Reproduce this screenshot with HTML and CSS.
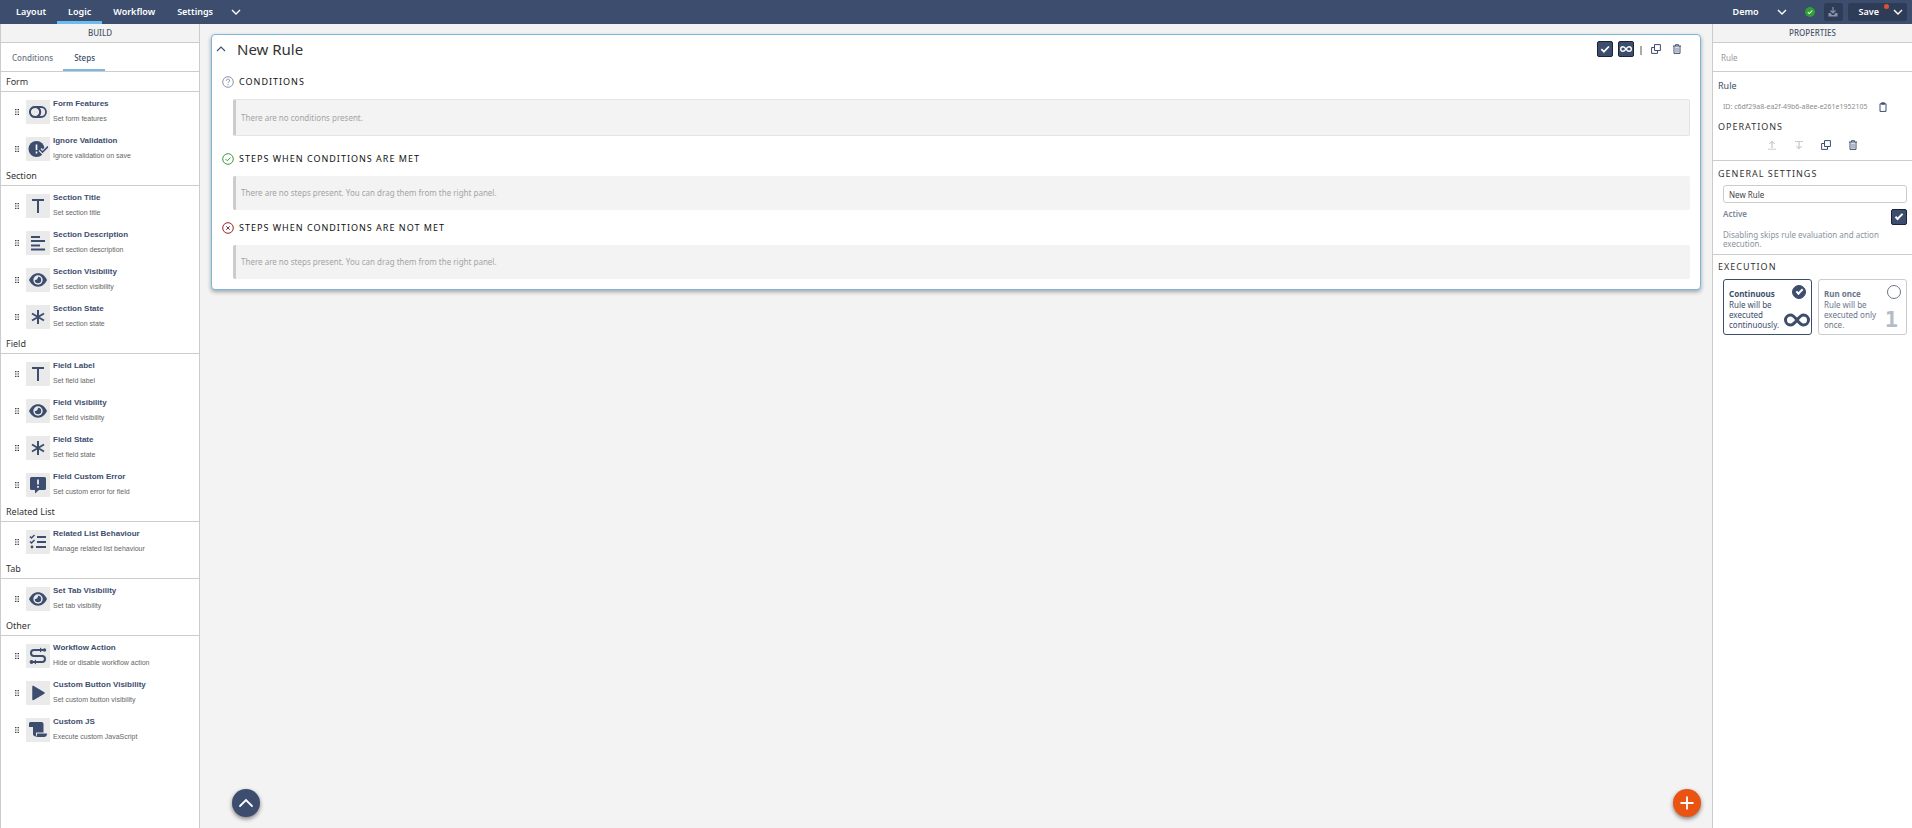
FILE: index.html
```html
<!DOCTYPE html>
<html lang="en">
<head>
    <meta charset="UTF-8">
    <meta name="viewport" content="width=device-width, initial-scale=1.0">
    <title>Logic - New Rule</title>
    <link rel="stylesheet" href="styles.css">
</head>
<body>
    <!-- shared icons -->
    <svg class="sprite" aria-hidden="true">
        <symbol id="i-down" viewBox="0 0 10 10"><path d="M1 3l4 4 4-4" fill="none" stroke="currentColor" stroke-width="1.4"/></symbol>
        <symbol id="i-up" viewBox="0 0 10 10"><path d="M1 7l4-4 4 4" fill="none" stroke="currentColor" stroke-width="1.1"/></symbol>
        <symbol id="i-check" viewBox="0 0 10 10"><path d="M1.3 5.2l2.6 2.5 5-5.2" fill="none" stroke="currentColor" stroke-width="1.7"/></symbol>
        <symbol id="i-infinity" viewBox="0 0 26 14"><path d="M13 7C10 3 8.500 2 6.500 2a5 5 0 0 0 0 10C8.500 12 10 11 13 7S17.500 2 19.500 2a5 5 0 0 1 0 10C17.500 12 16 11 13 7z" fill="none" stroke="currentColor"/></symbol>
        <symbol id="i-copy" viewBox="0 0 10 10"><path d="M3.500 .6h5.900v5.900H3.500zM3.500 3.500H.6v5.900h5.900V6.500" fill="none" stroke="currentColor"/></symbol>
        <symbol id="i-trash" viewBox="0 0 10 10"><path d="M1 2h8M3.500 2V.7h3V2M2 2v7.400h6V2" fill="none" stroke="currentColor"/><path d="M4 3.500v5M6 3.500v5" stroke="currentColor" stroke-width=".8"/></symbol>
        <symbol id="i-clipboard" viewBox="0 0 10 10"><path d="M2 1.800h6v7.600H2z" fill="none" stroke="currentColor"/><path d="M3.300.3h3.400v2.400H3.300z" fill="currentColor"/></symbol>
        <symbol id="i-dots" viewBox="0 0 4 6"><path d="M0 0h1.500v1.200H0zM2.500 0H4v1.200H2.500zM0 2.400h1.500v1.200H0zM2.500 2.400H4v1.200H2.500zM0 4.800h1.500V6H0zM2.500 4.800H4V6H2.500z" fill="currentColor"/></symbol>
        <symbol id="i-toggle" viewBox="0 0 20 20"><rect x="2" y="5" width="16" height="10" rx="5" fill="none" stroke="currentColor" stroke-width="1.800"/><circle cx="7" cy="10" r="5" fill="none" stroke="currentColor" stroke-width="1.800"/><path d="M9.500 5.500a5 5 0 0 1 0 9" fill="none" stroke="currentColor" stroke-width="1.800"/></symbol>
        <symbol id="i-ignore" viewBox="0 0 20 20"><circle cx="8.500" cy="10" r="8" fill="currentColor"/><path d="M8.500 5.500v5.500M8.500 12.500v2" stroke="#fff" stroke-width="1.600"/><path d="M12 10.500l3 3L20 7.500" fill="none" stroke="#eaeaea" stroke-width="4"/><path d="M11.500 10l3 3L20 7.500" fill="none" stroke="currentColor" stroke-width="1.600"/></symbol>
        <symbol id="i-text" viewBox="0 0 20 20"><path d="M4 4h12M10 4v13" fill="none" stroke="currentColor" stroke-width="2"/></symbol>
        <symbol id="i-lines" viewBox="0 0 20 20"><path d="M3 4h9M3 8h14M3 12.500h9M3 16.500h14" stroke="currentColor" stroke-width="2"/></symbol>
        <symbol id="i-eye" viewBox="0 0 20 20"><path d="M1 10C3 6 6 3.300 10 3.300S17 6 19 10c-2 4-5 6.700-9 6.700S3 14 1 10z" fill="currentColor"/><circle cx="10" cy="10" r="4.700" fill="#eaeaea"/><path d="M10 6.800A3.200 3.200 0 1 1 6.800 10c1.700.4 3.400-1.200 3.200-3.200z" fill="currentColor"/></symbol>
        <symbol id="i-star" viewBox="0 0 20 20"><path d="M10 3v14M4 6.500l12 7M16 6.500l-12 7" stroke="currentColor" stroke-width="2"/></symbol>
        <symbol id="i-error" viewBox="0 0 20 20"><path d="M3.500 2h13A1.500 1.500 0 0 1 18 3.500v10a1.500 1.500 0 0 1-1.500 1.500H11l-4 3.500V15H3.500A1.500 1.500 0 0 1 2 13.500v-10A1.500 1.500 0 0 1 3.500 2z" fill="currentColor"/><path d="M10 4.500v5M10 11v1.800" stroke="#fff" stroke-width="1.600"/></symbol>
        <symbol id="i-list" viewBox="0 0 20 20"><path d="M9 5h9M9 10h9M8 15h10" stroke="currentColor" stroke-width="2"/><path d="M2 4.500l1.500 1.500L6.500 3M2 9.500L3.500 11l3-3" fill="none" stroke="currentColor" stroke-width="1.500"/><circle cx="4" cy="15" r="1.400" fill="currentColor"/></symbol>
        <symbol id="i-flow" viewBox="0 0 20 20"><path d="M15 4H6a3 3 0 0 0 0 6h8a3 3 0 0 1 0 6H5" fill="none" stroke="currentColor" stroke-width="2"/><path d="M12 1.500L15 4l-3 2.500zM8 13.500L5 16l3 2.500z" fill="currentColor"/><circle cx="16.500" cy="4" r="1.700" fill="currentColor"/><circle cx="3.500" cy="16" r="1.900" fill="currentColor"/></symbol>
        <symbol id="i-play" viewBox="0 0 20 20"><path d="M5 3.500v13l11-6.500z" fill="currentColor" stroke="currentColor" stroke-width="1.500" stroke-linejoin="round"/></symbol>
        <symbol id="i-scroll" viewBox="0 0 20 20"><path d="M1 3.500C1 2.500 2 2 3 2h10.500a2 2 0 0 1 2 2v8.500H8v4c-2 0-3-1-3-2.500V7H1z" fill="currentColor"/><path d="M9 13.500h10a3 3 0 0 1-3 3.500H7.500c1 0 1.500-1 1.500-3.500z" fill="currentColor"/></symbol>
        <symbol id="i-moveup" viewBox="0 0 10 10"><path d="M5 8V1.500M2.300 4L5 1.300 7.700 4" fill="none" stroke="currentColor"/><path d="M1 9.200h8" stroke="currentColor" stroke-dasharray="1.500 .6"/></symbol>
        <symbol id="i-movedown" viewBox="0 0 10 10"><path d="M5 2v6.500M2.300 6L5 8.700 7.700 6" fill="none" stroke="currentColor"/><path d="M1 1.500h8" stroke="currentColor" stroke-dasharray="1.500 .6"/></symbol>
        <symbol id="i-download" viewBox="0 0 10 10"><path d="M5 0v6M2.500 3.500L5 6l2.500-2.500" fill="none" stroke="currentColor" stroke-width="1.200"/><path d="M.5 6v3.500h9V6H7.500L6 8H4L2.500 6z" fill="currentColor"/></symbol>
    </svg>

    <header class="topbar">
        <nav class="menu">
            <a href="#">Layout</a>
            <a href="#" class="active">Logic</a>
            <a href="#">Workflow</a>
            <a href="#">Settings</a>
            <button class="menu-more" aria-label="More"><svg class="icon"><use href="#i-down"/></svg></button>
        </nav>
        <div class="tools">
            <button class="env">Demo <svg class="icon"><use href="#i-down"/></svg></button>
            <span class="status"><svg><use href="#i-check"/></svg></span>
            <button class="dark-btn download" aria-label="Download"><svg class="icon"><use href="#i-download"/></svg></button>
            <button class="dark-btn save">Save <svg class="icon"><use href="#i-down"/></svg></button>
        </div>
    </header>

    <div class="layout">
        <aside class="panel build">
            <h2 class="panel-title">BUILD</h2>
            <div class="tabs">
                <a href="#">Conditions</a>
                <a href="#" class="active">Steps</a>
            </div>

            <h3 class="group">Form</h3>
            <div class="step"><svg class="grip"><use href="#i-dots"/></svg><span class="tile"><svg><use href="#i-toggle"/></svg></span><div><strong>Form Features</strong><p>Set form features</p></div></div>
            <div class="step"><svg class="grip"><use href="#i-dots"/></svg><span class="tile"><svg><use href="#i-ignore"/></svg></span><div><strong>Ignore Validation</strong><p>Ignore validation on save</p></div></div>

            <h3 class="group">Section</h3>
            <div class="step"><svg class="grip"><use href="#i-dots"/></svg><span class="tile"><svg><use href="#i-text"/></svg></span><div><strong>Section Title</strong><p>Set section title</p></div></div>
            <div class="step"><svg class="grip"><use href="#i-dots"/></svg><span class="tile"><svg><use href="#i-lines"/></svg></span><div><strong>Section Description</strong><p>Set section description</p></div></div>
            <div class="step"><svg class="grip"><use href="#i-dots"/></svg><span class="tile"><svg><use href="#i-eye"/></svg></span><div><strong>Section Visibility</strong><p>Set section visibility</p></div></div>
            <div class="step"><svg class="grip"><use href="#i-dots"/></svg><span class="tile"><svg><use href="#i-star"/></svg></span><div><strong>Section State</strong><p>Set section state</p></div></div>

            <h3 class="group">Field</h3>
            <div class="step"><svg class="grip"><use href="#i-dots"/></svg><span class="tile"><svg><use href="#i-text"/></svg></span><div><strong>Field Label</strong><p>Set field label</p></div></div>
            <div class="step"><svg class="grip"><use href="#i-dots"/></svg><span class="tile"><svg><use href="#i-eye"/></svg></span><div><strong>Field Visibility</strong><p>Set field visibility</p></div></div>
            <div class="step"><svg class="grip"><use href="#i-dots"/></svg><span class="tile"><svg><use href="#i-star"/></svg></span><div><strong>Field State</strong><p>Set field state</p></div></div>
            <div class="step"><svg class="grip"><use href="#i-dots"/></svg><span class="tile"><svg><use href="#i-error"/></svg></span><div><strong>Field Custom Error</strong><p>Set custom error for field</p></div></div>

            <h3 class="group">Related List</h3>
            <div class="step"><svg class="grip"><use href="#i-dots"/></svg><span class="tile"><svg><use href="#i-list"/></svg></span><div><strong>Related List Behaviour</strong><p>Manage related list behaviour</p></div></div>

            <h3 class="group">Tab</h3>
            <div class="step"><svg class="grip"><use href="#i-dots"/></svg><span class="tile"><svg><use href="#i-eye"/></svg></span><div><strong>Set Tab Visibility</strong><p>Set tab visibility</p></div></div>

            <h3 class="group">Other</h3>
            <div class="step"><svg class="grip"><use href="#i-dots"/></svg><span class="tile"><svg><use href="#i-flow"/></svg></span><div><strong>Workflow Action</strong><p>Hide or disable workflow action</p></div></div>
            <div class="step"><svg class="grip"><use href="#i-dots"/></svg><span class="tile"><svg><use href="#i-play"/></svg></span><div><strong>Custom Button Visibility</strong><p>Set custom button visibility</p></div></div>
            <div class="step"><svg class="grip"><use href="#i-dots"/></svg><span class="tile"><svg><use href="#i-scroll"/></svg></span><div><strong>Custom JS</strong><p>Execute custom JavaScript</p></div></div>
        </aside>

        <main class="canvas">
            <section class="rule">
                <div class="rule-head">
                    <button class="plain" aria-label="Collapse"><svg class="icon"><use href="#i-up"/></svg></button>
                    <h1>New Rule</h1>
                    <div class="rule-tools">
                        <button class="square" aria-label="Active"><svg><use href="#i-check"/></svg></button>
                        <button class="square wide" aria-label="Continuous"><svg><use href="#i-infinity"/></svg></button>
                        <span class="divider"></span>
                        <button class="plain copy" aria-label="Duplicate"><svg class="icon"><use href="#i-copy"/></svg></button>
                        <button class="plain" aria-label="Delete"><svg class="icon"><use href="#i-trash"/></svg></button>
                    </div>
                </div>

                <h2 class="rule-title"><svg class="mark gray" viewBox="0 0 12 12"><circle cx="6" cy="6" r="5.300"/><path d="M4.300 4.700a1.700 1.500 0 1 1 2.600 1.200c-.6.4-.9.600-.9 1.200M6 8v1.200"/></svg>CONDITIONS</h2>
                <div class="empty outlined">There are no conditions present.</div>

                <h2 class="rule-title"><svg class="mark green" viewBox="0 0 12 12"><circle cx="6" cy="6" r="5.300"/><path d="M3.500 6l1.800 1.800 3.200-3.200"/></svg>STEPS WHEN CONDITIONS ARE MET</h2>
                <div class="empty">There are no steps present. You can drag them from the right panel.</div>

                <h2 class="rule-title"><svg class="mark red" viewBox="0 0 12 12"><circle cx="6" cy="6" r="5.300"/><path d="M4.300 4.300l3.400 3.400M7.700 4.300L4.300 7.700"/></svg>STEPS WHEN CONDITIONS ARE NOT MET</h2>
                <div class="empty">There are no steps present. You can drag them from the right panel.</div>
            </section>

            <button class="fab fab-top" aria-label="Scroll to top"><svg viewBox="0 0 16 16"><path d="M2 11l6-6 6 6" fill="none" stroke="#fff" stroke-width="1.800" stroke-linecap="round"/></svg></button>
            <button class="fab fab-add" aria-label="Add rule"><svg viewBox="0 0 16 16"><path d="M8 1.500v13M1.500 8h13" stroke="#fff" stroke-width="1.800"/></svg></button>
        </main>

        <aside class="panel props">
            <h2 class="panel-title">PROPERTIES</h2>
            <div class="crumb">Rule</div>
            <div class="block first">
                <h3 class="name">Rule</h3>
                <div class="rule-id"><span>ID: c6df29a8-ea2f-49b6-a8ee-e261e1952105</span><button class="plain" aria-label="Copy ID"><svg class="icon"><use href="#i-clipboard"/></svg></button></div>
                <h3>OPERATIONS</h3>
                <div class="ops">
                    <button class="plain" disabled aria-label="Move up"><svg class="icon"><use href="#i-moveup"/></svg></button>
                    <button class="plain" disabled aria-label="Move down"><svg class="icon"><use href="#i-movedown"/></svg></button>
                    <button class="plain" aria-label="Duplicate"><svg class="icon"><use href="#i-copy"/></svg></button>
                    <button class="plain" aria-label="Delete"><svg class="icon"><use href="#i-trash"/></svg></button>
                </div>
            </div>
            <div class="block">
                <h3>GENERAL SETTINGS</h3>
                <input class="text" type="text" value="New Rule" aria-label="Rule name">
                <div class="active-row">
                    <label for="active">Active</label>
                    <input type="checkbox" id="active" checked>
                </div>
                <p class="hint">Disabling skips rule evaluation and action execution.</p>
            </div>
            <div class="block last">
                <h3>EXECUTION</h3>
                <div class="choices">
                    <label class="choice selected">
                        <input type="radio" name="execution" checked>
                        <strong>Continuous</strong>
                        <span>Rule will be executed continuously.</span>
                        <svg class="choice-icon"><use href="#i-infinity"/></svg>
                    </label>
                    <label class="choice">
                        <input type="radio" name="execution">
                        <strong>Run once</strong>
                        <span>Rule will be executed only once.</span>
                        <b class="one">1</b>
                    </label>
                </div>
            </div>
        </aside>
    </div>
</body>
</html>
```
FILE: styles.css
```css
*,
*::before,
*::after{
    padding: 0;
    margin: 0;
    box-sizing: border-box;
}

:root{
    --navy: #3d4d6e;
    --dark: #2f3c58;
    --line: #cccccc;
    --bg: #f3f3f3;
    --blue: #7ab8dc;
}

body{
    display: flex;
    flex-direction: column;
    min-height: 100vh;
    background: var(--bg);
    color: #333;
    font: 9px/12px "Noto Sans", sans-serif;
}

button, input{
    font: inherit;
    color: inherit;
}
button{
    border: none;
    background: none;
}
a{
    color: inherit;
    text-decoration: none;
}
svg{
    display: block;
}
.sprite{
    display: none;
}
.icon{
    width: 10px;
    height: 10px;
}

/* top bar */
.topbar{
    display: flex;
    justify-content: space-between;
    height: 24px;
    padding: 0 5px;
    background: var(--navy);
    color: white;
    font-size: 9px;
    font-weight: 600;
}
.menu{
    display: flex;
}
.menu a{
    padding: 6px 11px 0;
    border-bottom: 3px solid transparent;
}
.menu .active{
    border-color: #6bbcf0;
}
.menu-more{
    padding: 0 7px;
}
.tools{
    display: flex;
    align-items: center;
}
.env{
    display: flex;
    align-items: center;
    gap: 18px;
    margin-right: 18px;
}
.status{
    display: grid;
    place-items: center;
    width: 10px;
    height: 10px;
    margin-right: 9px;
    border-radius: 50%;
    background: #2f9e34;
}
.status svg{
    width: 6px;
    height: 6px;
}
.dark-btn{
    display: flex;
    align-items: center;
    height: 18px;
    border-radius: 2px;
    background: var(--dark);
}
.download{
    width: 19px;
    justify-content: center;
    margin-right: 5px;
    color: #8a93a8;
}
.save{
    position: relative;
    gap: 14px;
    padding: 0 4px 0 11px;
}
.save::after{
    content: "";
    position: absolute;
    top: 1px;
    right: 18px;
    width: 5px;
    height: 5px;
    border-radius: 50%;
    background: #d9542f;
}

.layout{
    display: flex;
    flex-grow: 1;
}

/* side panels */
.panel{
    width: 200px;
    flex-shrink: 0;
    background: white;
    border-left: 1px solid var(--line);
}
.build{
    border-right: 1px solid var(--line);
}
.panel-title{
    height: 19px;
    border-bottom: 1px solid var(--line);
    background: var(--bg);
    color: #4c566a;
    font-size: 8px;
    font-weight: 500;
    line-height: 18px;
    text-align: center;
}
.tabs{
    display: flex;
    height: 29px;
    border-bottom: 1px solid var(--line);
    color: #6b7684;
    font-size: 8px;
    font-weight: 500;
    line-height: 30px;
}
.tabs a{
    padding: 0 10px 0 11px;
    border-bottom: 2px solid transparent;
}
.tabs .active{
    border-color: var(--blue);
    color: var(--navy);
}
.group{
    height: 20px;
    padding-left: 5px;
    border-bottom: 1px solid var(--line);
    font-size: 9px;
    font-weight: 400;
    line-height: 20px;
}
.step{
    display: flex;
    height: 37px;
    padding: 8px 0 0 14px;
    color: var(--navy);
    font-family: "Liberation Sans", sans-serif;
}
.grip{
    width: 4px;
    height: 6px;
    margin: 9px 7px 0 0;
    color: #444;
}
.tile{
    display: grid;
    place-items: center;
    width: 24px;
    height: 24px;
    margin-right: 3px;
    background: #eaeaea;
}
.tile svg{
    width: 20px;
    height: 20px;
}
.step strong{
    display: block;
    margin-top: -2px;
    font-size: 8px;
    line-height: 12px;
}
.step p{
    margin-top: 3px;
    color: #666;
    font-size: 7px;
    line-height: 11px;
}

/* rule card */
.canvas{
    position: relative;
    flex-grow: 1;
    padding: 10px 11px;
}
.rule{
    padding: 0 10px 10px;
    border: 1px solid var(--blue);
    border-radius: 4px;
    background: white;
    box-shadow: 0 2px 4px #0005;
}
.rule-head{
    display: flex;
    align-items: center;
    height: 28px;
    margin-bottom: 9px;
    margin-left: -6px;
}
.rule-head h1{
    margin-left: 11px;
    font-size: 15px;
    font-weight: 400;
    line-height: 20px;
}
.rule-tools{
    display: flex;
    align-items: center;
    gap: 5px;
    margin-left: auto;
    padding-right: 8px;
}
.square{
    display: grid;
    place-items: center;
    width: 16px;
    height: 16px;
    border: 1px solid #1c2433;
    border-radius: 2px;
    background: var(--navy);
    color: white;
}
.square svg{
    width: 10px;
    height: 10px;
}
.wide svg{
    width: 12px;
    stroke-width: 3px;
}
.divider{
    width: 2px;
    height: 9px;
    margin: 2px 0 0 1px;
    background: #aaa;
}
.plain{
    color: var(--navy);
}
.plain:disabled{
    color: #b4bcc8;
}
.copy{
    margin: 0 6px 0 4px;
}
.rule-title{
    display: flex;
    align-items: center;
    gap: 5px;
    height: 20px;
    margin-bottom: 7px;
    color: #111;
    font-size: 9px;
    font-weight: 400;
    letter-spacing: 1px;
}
.mark{
    width: 12px;
    height: 12px;
    fill: none;
    stroke: currentColor;
}
.gray{
    color: #8a93a8;
}
.green{
    color: #3d9a41;
}
.red{
    color: #96262c;
}
.empty{
    display: flex;
    align-items: center;
    height: 34px;
    margin: 0 0 8px 11px;
    padding-left: 5px;
    border-left: 3px solid #ccc;
    border-radius: 2px;
    background: var(--bg);
    color: #a4a4a4;
    font-size: 8px;
}
.outlined{
    height: 37px;
    margin-bottom: 13px;
    border: 1px solid #e4e4e4;
    border-left: 3px solid #ccc;
}
.empty:last-child{
    margin-bottom: 0;
}

.fab{
    position: absolute;
    bottom: 11px;
    display: grid;
    place-items: center;
    width: 28px;
    height: 28px;
    border-radius: 50%;
    box-shadow: 0 2px 4px #0007;
}
.fab svg{
    width: 16px;
    height: 16px;
}
.fab-top{
    left: 32px;
    background: var(--navy);
}
.fab-add{
    right: 11px;
    background: #e95412;
}

/* properties */
.crumb{
    height: 29px;
    padding-left: 8px;
    border-bottom: 1px solid var(--line);
    color: #999;
    font-size: 8px;
    line-height: 29px;
}
.block{
    padding: 7px 5px 0;
    border-bottom: 1px solid var(--line);
}
.block h3{
    font-size: 9px;
    font-weight: 400;
    line-height: 12px;
    letter-spacing: 1px;
}
.block .name{
    color: var(--navy);
    letter-spacing: 0;
}
.first{
    height: 89px;
    padding-top: 8px;
}
.rule-id{
    display: flex;
    align-items: center;
    gap: 10px;
    height: 14px;
    margin: 8px 0 7px 5px;
    color: #8c8c8c;
    font-size: 7px;
}
.ops{
    display: flex;
    justify-content: center;
    gap: 17px;
    padding-top: 7px;
}
.text{
    width: calc(100% - 5px);
    height: 18px;
    margin: 5px 0 0 5px;
    padding: 0 5px;
    border: 1px solid var(--line);
    border-radius: 3px;
    font-size: 8px;
    color: #444;
}
.active-row{
    display: flex;
    justify-content: space-between;
    margin: 6px 0 5px 5px;
    color: #7c8696;
    font-size: 8px;
    font-weight: 600;
    line-height: 10px;
}
.active-row input{
    appearance: none;
    width: 16px;
    height: 16px;
    border: 1px solid #1c2433;
    border-radius: 2px;
    background: var(--navy);
    display: grid;
    place-items: center;
}
.active-row input:checked::before{
    content: "";
    width: 8px;
    height: 4px;
    border: solid white;
    border-width: 0 0 2px 2px;
    rotate: -45deg;
    margin-bottom: 2px;
}
.hint{
    margin-left: 5px;
    padding-bottom: 6px;
    color: #8a93a0;
    font-size: 8px;
    line-height: 9px;
}
.last{
    border: none;
    padding-top: 6px;
}
.choices{
    display: flex;
    gap: 6px;
    margin: 6px 0 0 5px;
}
.choice{
    position: relative;
    flex: 1;
    height: 56px;
    padding: 9px 5px 0;
    border: 1px solid var(--line);
    border-radius: 3px;
    color: #6b7688;
    font-size: 8px;
    line-height: 10px;
}
.choice strong{
    display: block;
    margin-bottom: 2px;
    line-height: 9px;
}
.choice span{
    display: block;
    width: 53px;
}
.choice input{
    position: absolute;
    top: 5px;
    right: 5px;
    appearance: none;
    width: 14px;
    height: 14px;
    border: 1px solid #6b7688;
    border-radius: 50%;
}
.selected{
    border-color: var(--navy);
    color: var(--navy);
}
.selected input{
    display: grid;
    place-items: center;
    border-color: var(--navy);
    background: var(--navy);
}
.selected input::before{
    content: "";
    width: 7px;
    height: 4px;
    border: solid white;
    border-width: 0 0 2px 2px;
    rotate: -45deg;
    margin-bottom: 2px;
}
.choice-icon{
    position: absolute;
    right: 1px;
    bottom: 7px;
    width: 26px;
    height: 14px;
    stroke-width: 3px;
}
.one{
    position: absolute;
    right: 8px;
    bottom: 4px;
    color: #b4bcc8;
    font: bold 22px/20px "DejaVu Sans Mono", monospace;
}
```
